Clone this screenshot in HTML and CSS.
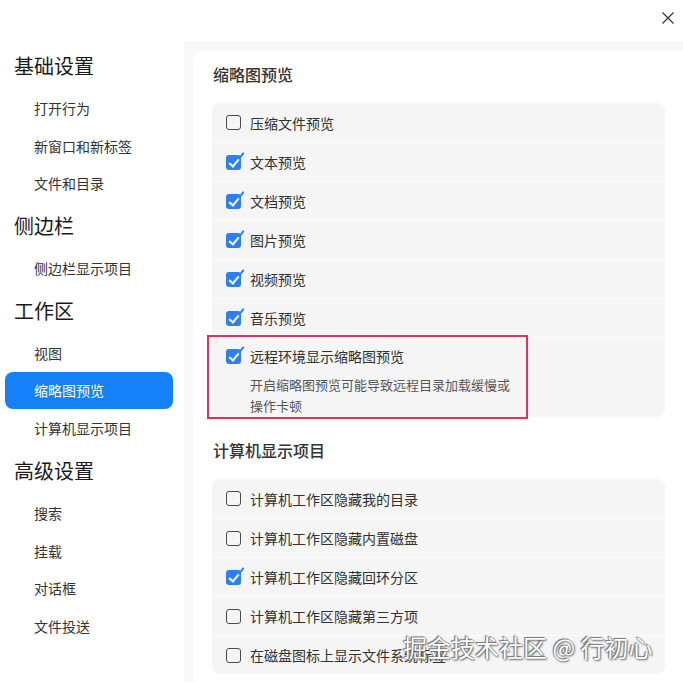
FILE: index.html
```html
<!DOCTYPE html>
<html lang="zh-CN">
<head>
    <meta charset="UTF-8">
    <title>设置</title>
    <link rel="stylesheet" href="styles.css">
</head>
<body>
    <div class="window">
        <!-- Sidebar -->
        <nav class="sidebar">
            <div class="nav-group">基础设置</div>
            <div class="nav-item">打开行为</div>
            <div class="nav-item">新窗口和新标签</div>
            <div class="nav-item">文件和目录</div>
            <div class="nav-group">侧边栏</div>
            <div class="nav-item">侧边栏显示项目</div>
            <div class="nav-group">工作区</div>
            <div class="nav-item">视图</div>
            <div class="nav-item active">缩略图预览</div>
            <div class="nav-item">计算机显示项目</div>
            <div class="nav-group">高级设置</div>
            <div class="nav-item">搜索</div>
            <div class="nav-item">挂载</div>
            <div class="nav-item">对话框</div>
            <div class="nav-item">文件投送</div>
        </nav>

        <!-- Main -->
        <div class="main">
            <div class="titlebar">
                <button class="close-btn" aria-label="关闭">
                    <svg width="14" height="14" viewBox="0 0 14 14"><path d="M1.5 1.5 L12.5 12.5 M12.5 1.5 L1.5 12.5" stroke="#333" stroke-width="1.2" fill="none"/></svg>
                </button>
            </div>
            <div class="content">
                <div class="panel">
                    <h2 class="section-title">缩略图预览</h2>
                    <div class="card">
                        <div class="row"><span class="box"></span>压缩文件预览</div>
                        <div class="row"><span class="box checked"></span>文本预览</div>
                        <div class="row"><span class="box checked"></span>文档预览</div>
                        <div class="row"><span class="box checked"></span>图片预览</div>
                        <div class="row"><span class="box checked"></span>视频预览</div>
                        <div class="row"><span class="box checked"></span>音乐预览</div>
                        <div class="row row-tall">
                            <div class="row-line"><span class="box checked"></span>远程环境显示缩略图预览</div>
                            <p class="row-desc">开启缩略图预览可能导致远程目录加载缓慢或操作卡顿</p>
                            <div class="annot"></div>
                        </div>
                    </div>

                    <h2 class="section-title second">计算机显示项目</h2>
                    <div class="card">
                        <div class="row"><span class="box"></span>计算机工作区隐藏我的目录</div>
                        <div class="row"><span class="box"></span>计算机工作区隐藏内置磁盘</div>
                        <div class="row"><span class="box checked"></span>计算机工作区隐藏回环分区</div>
                        <div class="row"><span class="box"></span>计算机工作区隐藏第三方项</div>
                        <div class="row"><span class="box"></span>在磁盘图标上显示文件系统标签</div>
                    </div>
                </div>
            </div>
        </div>
    </div>

    <div class="watermark">掘金技术社区 @ 行初心</div>
</body>
</html>
```

FILE: styles.css
```css
body {
    margin: 0;
    width: 683px;
    height: 682px;
    overflow: hidden;
    background-color: #ffffff;
    font-family: "Noto Sans CJK SC", "Noto Sans", sans-serif;
    color: #333;
    position: relative;
}
.window {
    display: flex;
    height: 682px;
}
/* Sidebar */
.sidebar {
    width: 184px;
    flex-shrink: 0;
    padding: 43px 11px 0 5px;
    box-sizing: border-box;
}
.nav-group {
    height: 46px;
    line-height: 46px;
    padding-left: 9px;
    font-size: 20px;
    color: #1a1a1a;
}
.nav-item {
    height: 36.7px;
    line-height: 36.7px;
    margin: 1px 0;
    padding-left: 29px;
    font-size: 14px;
    color: #333;
    border-radius: 8px;
}
.nav-item.active {
    background-color: #1481f9;
    color: #fff;
}
/* Main */
.main {
    flex: 1;
    display: flex;
    flex-direction: column;
}
.titlebar {
    height: 42px;
    display: flex;
    justify-content: flex-end;
    align-items: center;
    padding-right: 8px;
    padding-bottom: 6px;
    box-sizing: border-box;
}
.close-btn {
    border: none;
    background: none;
    padding: 0;
    width: 14px;
    height: 14px;
    cursor: pointer;
}
.content {
    flex: 1;
    background-color: #f8f8f8;
    padding: 10px 0 0 9px;
}
.panel {
    background-color: #fff;
    border-radius: 10px 0 0 0;
    padding: 11px 18px 8px 19px;
    height: 100%;
    box-sizing: border-box;
}
.section-title {
    margin: 0 0 17px 1px;
    font-size: 16px;
    line-height: 24px;
    font-weight: 500;
    color: #333;
}
.section-title.second {
    margin-top: 21px;
}
.card {
    background-color: #f5f5f5;
    border-radius: 8px;
}
.row {
    height: 39px;
    display: flex;
    align-items: center;
    padding-left: 14px;
    font-size: 14px;
    color: #303030;
    border-top: 1px solid #fcfcfc;
    box-sizing: border-box;
}
.row:first-child {
    border-top: none;
}
.row-tall {
    height: 80px;
    display: block;
    position: relative;
    padding-top: 7px;
}
.row-line {
    display: flex;
    align-items: center;
    height: 22px;
}
.row-desc {
    margin: 7px 0 0 24px;
    width: 262px;
    font-size: 13px;
    line-height: 21px;
    color: #555;
}
.box {
    width: 15px;
    height: 15px;
    margin-right: 9px;
    flex-shrink: 0;
    box-sizing: border-box;
    border: 1.6px solid #4a4a4a;
    border-radius: 3px;
    position: relative;
}
.box.checked {
    border: none;
    background-color: #2b7ff3;
}
/* check mark */
.box.checked::before {
    content: '';
    position: absolute;
    left: 5px;
    top: 2px;
    width: 4px;
    height: 8px;
    border-right: 2px solid #fff;
    border-bottom: 2px solid #fff;
    transform: rotate(40deg);
    transform-origin: 50% 50%;
}
.box.checked::after {
    content: '';
    position: absolute;
    right: -2px;
    top: -3px;
    width: 2px;
    height: 6px;
    background-color: #2b7ff3;
    transform: rotate(38deg);
    border-radius: 1px;
}
/* red annotation frame */
.annot {
    position: absolute;
    left: -5px;
    top: -3px;
    width: 321px;
    height: 84px;
    border: 2px solid #e5315a;
    box-sizing: border-box;
    pointer-events: none;
}
.watermark {
    position: absolute;
    left: 403px;
    top: 633px;
    font-size: 24px;
    line-height: 28px;
    color: #fff;
    white-space: nowrap;
    text-shadow: 0 0 1px #555, 1px 1px 2px #666, -1px -1px 1px #777;
}
```
